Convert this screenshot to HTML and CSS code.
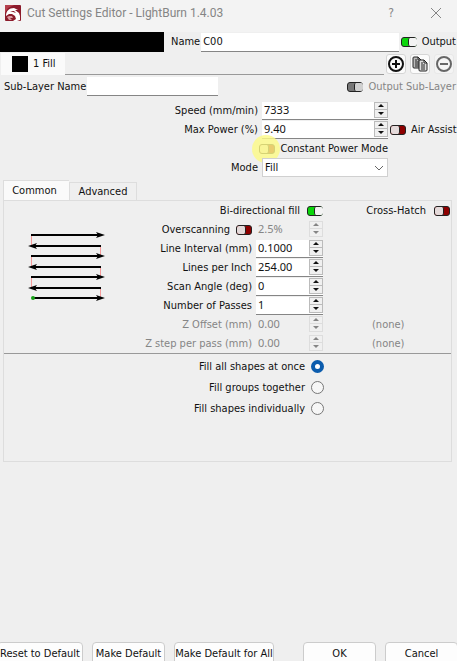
FILE: index.html
```html
<!DOCTYPE html>
<html lang="en">
<head>
  <meta charset="UTF-8">
  <meta name="viewport" content="width=device-width, initial-scale=1">
  <title>Cut Settings Editor - LightBurn 1.4.03</title>
  <link rel="stylesheet" href="styles.css">
</head>
<body>

  <header class="titlebar">
    <svg class="logo" width="16" height="16" viewBox="0 0 16 16">
      <rect width="16" height="16" rx="1" fill="#8c1c2c"/>
      <path d="M0 1a1 1 0 0 1 1-1h8L3 3 0 8z" fill="#b5404c"/>
      <path d="M1 11C1 6 4 3 9 3l4 2-3 0 4 3 1 3 0 4-3 1H8l3-2-1-3-3-2-3 0z" fill="#fff"/>
      <path d="M5 6l4 0 2 2-3-1z" fill="#8c1c2c"/>
      <path d="M2 12l2-1 3 0 1 2-3 0 2 2H4z" fill="#d99aa0"/>
    </svg>
    <h1 class="title">Cut Settings Editor - LightBurn 1.4.03</h1>
    <button class="title-button" aria-label="Help">?</button>
    <button class="title-button" aria-label="Close">
      <svg width="12" height="12" viewBox="0 0 12 12"><path d="M1 1l10 10M11 1L1 11" stroke="#858585" fill="none"/></svg>
    </button>
  </header>

  <main class="editor">
    <div class="name-row">
      <div class="layer-color"></div>
      <label for="name">Name</label>
      <input class="text-box" id="name" type="text" value="C00">
      <label class="toggle-label"><input class="toggle" type="checkbox" checked>Output</label>
    </div>

    <div class="layer-tabs">
      <button class="layer-tab"><span class="swatch"></span>1 Fill</button>
      <div class="layer-line"></div>
      <div class="layer-actions">
        <button class="icon-button" aria-label="Add sub-layer">
          <svg width="18" height="18" viewBox="0 0 18 18" fill="none" stroke="#111"><circle cx="9" cy="9" r="7" stroke-width="2"/><path d="M9 5v8M5 9h8" stroke-width="2"/></svg>
        </button>
        <button class="icon-button" aria-label="Duplicate sub-layer">
          <svg width="18" height="18" viewBox="0 0 18 18" stroke="#222">
            <path d="M2 3q0-1 1-1h4l3 3v8H3q-1 0-1-1z" fill="#bbb"/>
            <path d="M7 2v3h3M4 5h2M4 7h4M4 9h4M4 11h4" fill="none"/>
            <path d="M8 6q0-1 1-1h4l3 3v7q0 1-1 1H9q-1 0-1-1z" fill="#ddd"/>
            <path d="M13 5v3h3M10 8h2M10 10h4M10 12h4M10 14h4" fill="none"/>
          </svg>
        </button>
        <button class="icon-button flat" aria-label="Remove sub-layer">
          <svg width="18" height="18" viewBox="0 0 18 18" fill="none" stroke="#666"><circle cx="9" cy="9" r="7" stroke-width="2"/><path d="M5 9h8" stroke-width="2"/></svg>
        </button>
      </div>
    </div>

    <div class="sub-row">
      <label for="sub-name">Sub-Layer Name</label>
      <input class="text-box" id="sub-name" type="text">
      <label class="toggle-label disabled"><input class="toggle" type="checkbox" checked disabled>Output Sub-Layer</label>
    </div>

    <div class="main-settings">
      <label for="speed">Speed (mm/min)</label>
      <div class="spin"><input id="speed" type="text" value="7333"><div class="arrows"><button class="up" aria-label="Increase"></button><button class="down" aria-label="Decrease"></button></div></div>
      <span></span>

      <label for="power">Max Power (%)</label>
      <div class="spin"><input id="power" type="text" value="9.40"><div class="arrows"><button class="up" aria-label="Increase"></button><button class="down" aria-label="Decrease"></button></div></div>
      <label class="toggle-label air"><input class="toggle" type="checkbox">Air Assist</label>

      <label class="toggle-label constant"><span class="highlight"><input class="toggle" type="checkbox"></span>Constant Power Mode</label>

      <label for="mode">Mode</label>
      <div class="combo">
        <select id="mode"><option>Fill</option><option>Line</option></select>
        <svg class="chevron" width="10" height="6" viewBox="0 0 10 6"><path d="M1 1l4 4 4-4" fill="none" stroke="#666"/></svg>
      </div>
    </div>

    <nav class="tabs">
      <button class="tab active">Common</button>
      <button class="tab">Advanced</button>
    </nav>

    <section class="panel">
      <div class="fill-settings">
        <svg class="preview" width="84" height="76" viewBox="0 0 84 76">
          <path d="M7 5h70M7 16h70M7 26h70M7 37h70M7 47h70M7 58h70M8 68h70" stroke="#000" stroke-width="2"/>
          <path d="M7.500 6v9M76.500 17v8M7.500 27v9M76.500 38v8M7.500 48v9M76.500 59v8" stroke="#f59a9a"/>
          <path d="M81 5l-9-3 2 3-2 3zM81 26l-9-3 2 3-2 3zM81 47l-9-3 2 3-2 3zM81 68l-9-3 2 3-2 3zM4 16l9-3-2 3 2 3zM4 37l9-3-2 3 2 3zM4 58l9-3-2 3 2 3z"/>
          <circle cx="9" cy="68" r="2" fill="#16a016"/>
        </svg>

        <label class="toggle-label wide" for="bidi">Bi-directional fill<input class="toggle" id="bidi" type="checkbox" checked></label>
        <label class="toggle-label cross">Cross-Hatch<input class="toggle" type="checkbox"></label>

        <label class="toggle-label overscan">Overscanning<input class="toggle" type="checkbox"></label>
        <div class="spin disabled"><input type="text" value="2.5%" aria-label="Overscanning" disabled><div class="arrows"><button class="up" aria-label="Increase" disabled></button><button class="down" aria-label="Decrease" disabled></button></div></div>

        <label for="interval">Line Interval (mm)</label>
        <div class="spin"><input id="interval" type="text" value="0.1000"><div class="arrows"><button class="up" aria-label="Increase"></button><button class="down" aria-label="Decrease"></button></div></div>

        <label for="lpi">Lines per Inch</label>
        <div class="spin"><input id="lpi" type="text" value="254.00"><div class="arrows"><button class="up" aria-label="Increase"></button><button class="down" aria-label="Decrease"></button></div></div>

        <label for="angle">Scan Angle (deg)</label>
        <div class="spin"><input id="angle" type="text" value="0"><div class="arrows"><button class="up" aria-label="Increase"></button><button class="down" aria-label="Decrease"></button></div></div>

        <label for="passes">Number of Passes</label>
        <div class="spin"><input id="passes" type="text" value="1"><div class="arrows"><button class="up" aria-label="Increase"></button><button class="down" aria-label="Decrease"></button></div></div>

        <label class="disabled" for="z-offset">Z Offset (mm)</label>
        <div class="spin disabled"><input id="z-offset" type="text" value="0.00" disabled><div class="arrows"><button class="up" aria-label="Increase" disabled></button><button class="down" aria-label="Decrease" disabled></button></div></div>
        <span class="note">(none)</span>

        <label class="disabled" for="z-step">Z step per pass (mm)</label>
        <div class="spin disabled"><input id="z-step" type="text" value="0.00" disabled><div class="arrows"><button class="up" aria-label="Increase" disabled></button><button class="down" aria-label="Decrease" disabled></button></div></div>
        <span class="note">(none)</span>
      </div>

      <div class="fill-order">
        <label>Fill all shapes at once<input class="radio" type="radio" name="order" checked></label>
        <label>Fill groups together<input class="radio" type="radio" name="order"></label>
        <label>Fill shapes individually<input class="radio" type="radio" name="order"></label>
      </div>
    </section>
  </main>

  <footer class="footer">
    <button class="button reset">Reset to Default</button>
    <button class="button">Make Default</button>
    <button class="button all">Make Default for All</button>
    <button class="button ok">OK</button>
    <button class="button">Cancel</button>
  </footer>

</body>
</html>
```

FILE: styles.css
```css
* {
  box-sizing: border-box;
}
body {
  margin: 0;
  height: 100vh;
  display: flex;
  flex-direction: column;
  overflow: hidden;
  background: #efefef;
  color: #111;
  font: 11px/18px "DejaVu Sans Condensed", "DejaVu Sans", sans-serif;
  white-space: nowrap;
}
button, input, select {
  margin: 0;
  padding: 0;
  border: none;
  background: none;
  font: inherit;
  color: inherit;
}
svg {
  display: block;
}
.disabled {
  color: #858585;
}

/* title bar */
.titlebar {
  display: flex;
  align-items: center;
  height: 32px;
  padding: 0 15px 7px 5px;
  background: #f3f3f3;
}
.title {
  flex: 1;
  margin: 0 0 0 6px;
  font: 12px/18px Roboto, "Open Sans", sans-serif;
  color: #858585;
}
.title-button {
  width: 12px;
  margin-left: 33px;
  display: flex;
  justify-content: center;
  font-size: 12px;
  color: #858585;
}

/* layer name and sub-layers */
.name-row {
  display: flex;
  align-items: center;
  height: 20px;
  padding-right: 1px;
}
.layer-color {
  width: 164px;
  height: 20px;
  margin-right: 7px;
  background: #000;
}
.text-box {
  height: 19px;
  padding: 0 2px;
  background: #fff;
  border-bottom: 1px solid #858585;
}
.name-row .text-box {
  flex: 1;
  min-width: 0;
  margin: 0 2px 0 1px;
}
.toggle-label {
  display: flex;
  align-items: center;
  gap: 5px;
}
.toggle {
  appearance: none;
  flex: none;
  width: 16px;
  height: 10px;
  border: 1px solid #222;
  border-radius: 3px;
  background: #8e0000;
}
.toggle::before {
  content: "";
  display: block;
  width: 8px;
  height: 8px;
  border-right: 1px solid #222;
  border-radius: 2px;
  background: #e4dada;
}
.toggle:checked {
  background: #0bd60b;
}
.toggle:checked::before {
  margin-left: 6px;
  border-right: none;
  border-left: 1px solid #222;
  background: #f3f3f3;
}
.toggle:disabled {
  background: #777;
}
.toggle:disabled::before {
  background: #d0d0d0;
}
.layer-tabs {
  display: flex;
  height: 23px;
  padding: 1px 3px 0 1px;
}
.layer-tab {
  display: flex;
  align-items: center;
  gap: 5px;
  width: 64px;
  padding-left: 11px;
  background: #fafafa;
}
.swatch {
  width: 16px;
  height: 16px;
  background: #000;
}
.layer-line {
  flex: 1;
  border-bottom: 1px solid #999;
}
.layer-actions {
  display: flex;
  gap: 4px;
  padding: 1px 0 1px 2px;
}
.icon-button {
  width: 20px;
  height: 20px;
  display: flex;
  align-items: center;
  justify-content: center;
  border: 1px solid #d5d5d5;
  border-radius: 3px;
  background: #fbfbfb;
}
.icon-button svg {
  flex: none;
}
.icon-button.flat {
  border-color: #e8e8e8;
  background: #f4f4f4;
}
.sub-row {
  display: flex;
  align-items: center;
  margin-top: 2px;
  padding: 0 1px 0 4px;
}
.sub-row .text-box {
  width: 131px;
  margin: 0 auto 0 1px;
}

/* speed, power and mode */
.main-settings {
  display: grid;
  grid-template-columns: 1fr 126px 65px;
  grid-auto-rows: 19px;
  column-gap: 4px;
  align-items: center;
  justify-items: end;
  margin-top: 5px;
}
.spin {
  display: flex;
  width: 100%;
  height: 18px;
  background: #fff;
  border-bottom: 1px solid #858585;
}
.spin input {
  flex: 1;
  min-width: 0;
  padding-left: 2px;
  font-family: "Noto Sans", sans-serif;
}
.arrows {
  display: flex;
  flex-direction: column;
  width: 14px;
  height: 16px;
  border: 1px solid #bbb;
  background: #f0f0f0;
}
.arrows button {
  flex: 1;
  display: flex;
  align-items: center;
  justify-content: center;
}
.arrows .up {
  border-bottom: 1px solid #bbb;
}
.arrows button::before {
  content: "";
  border: 3px solid transparent;
}
.arrows .up::before {
  border-top: none;
  border-bottom-color: currentColor;
}
.arrows .down::before {
  border-bottom: none;
  border-top-color: currentColor;
}
.spin.disabled {
  background: none;
  border-color: transparent;
}
.spin.disabled .arrows, .spin.disabled .up {
  border-color: #ddd;
}
.air {
  width: 67px;
}
.constant {
  grid-column: 1 / 3;
}
.constant + label {
  grid-column: 1;
}
.highlight {
  position: relative;
  display: flex;
}
.highlight::after {
  content: "";
  position: absolute;
  left: -7px;
  top: -9px;
  width: 28px;
  height: 28px;
  border-radius: 50%;
  background: rgba(253, 250, 135, 0.82);
}
.combo {
  position: relative;
  width: 100%;
}
.combo select {
  appearance: none;
  display: block;
  width: 100%;
  height: 19px;
  padding-left: 2px;
  border: 1px solid #d0d0d0;
  background: #fff;
}
.chevron {
  position: absolute;
  right: 4px;
  top: 7px;
  pointer-events: none;
}

/* tab pages */
.tabs {
  display: flex;
  align-items: flex-end;
  height: 20px;
  margin: 3px 5px 0 3px;
}
.tab {
  height: 18px;
  width: 68px;
  border: 1px solid #ddd;
  border-bottom: none;
}
.tab.active {
  width: 66px;
  height: 20px;
  padding-right: 4px;
  border-right: none;
  background: #fafafa;
}
.panel {
  height: 262px;
  margin: 0 5px 0 3px;
  border: 1px solid #ddd;
}
.fill-settings {
  display: grid;
  grid-template-columns: 110px 1fr 67px 123px;
  grid-auto-rows: 19px;
  column-gap: 4px;
  align-items: center;
  justify-items: end;
  padding-right: 1px;
  border-bottom: 1px solid #999;
}
.fill-settings > label {
  grid-column: 2;
}
.fill-settings > .cross {
  grid-column: 4;
  gap: 8px;
}
.fill-settings > .wide {
  grid-column: 2 / 4;
  gap: 7px;
}
.preview {
  grid-column: 1;
  grid-row: 2 / 7;
  justify-self: start;
  margin-left: 20px;
}
.overscan {
  gap: 6px;
}
.fill-settings > .wide, .fill-settings > .cross {
  grid-row: 1;
}
.note {
  grid-column: 4;
  justify-self: start;
  margin-left: 45px;
  color: #858585;
}
.fill-order {
  display: flex;
  flex-direction: column;
  align-items: flex-end;
  padding: 2px 127px 0 0;
}
.fill-order label {
  display: flex;
  align-items: center;
  gap: 6px;
  height: 21px;
}
.radio {
  appearance: none;
  width: 13px;
  height: 13px;
  border: 1px solid #777;
  border-radius: 50%;
  background: #f6f6f6;
}
.radio:checked {
  border: 4px solid #0b5cad;
  background: #fff;
}

/* the window's bottom edge cuts through the buttons */
.footer {
  display: flex;
  gap: 9px;
  height: 19px;
  margin: auto -1px 0 -3px;
}
.button {
  flex: none;
  width: 73px;
  height: 24px;
  border: 1px solid #ccc;
  border-radius: 4px;
  background: #fdfdfd;
}
.button.reset {
  width: 86px;
}
.button.all {
  width: 100px;
}
.button.ok {
  margin-left: auto;
}
```
